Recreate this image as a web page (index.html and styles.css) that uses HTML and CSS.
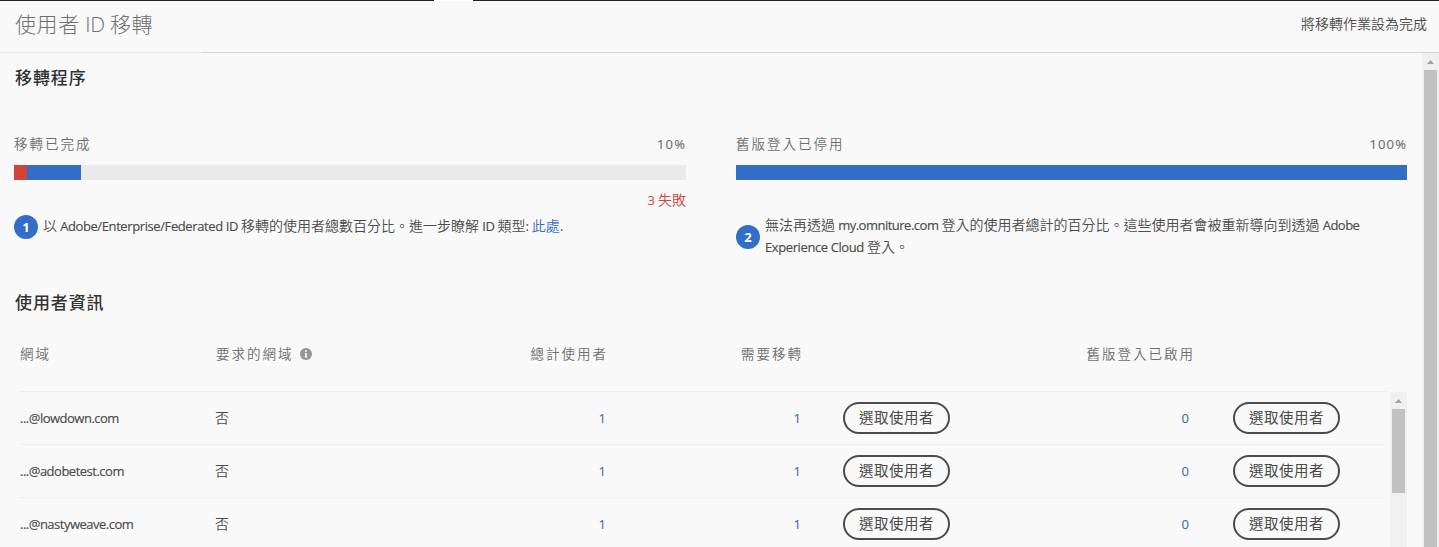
FILE: index.html
```html
<!DOCTYPE html>
<html lang="zh-Hant">
<head>
<meta charset="utf-8">
<title>使用者 ID 移轉</title>
<link rel="stylesheet" href="styles.css">
</head>
<body>
<div class="app">
  <div class="topline"><span class="topline-tab"></span></div>
  <header class="header">
    <h1 class="title">使用者 <span class="title-latin">ID</span> 移轉</h1>
    <a class="complete">將移轉作業設為完成</a>
  </header>
  <div class="header-rule"><span class="header-rule-light"></span></div>
  <div class="body">
    <main class="content">
      <h2 class="section-title">移轉程序</h2>
      <div class="progress-row">
        <section class="progress">
          <div class="progress-head"><span class="label">移轉已完成</span><span class="percent">10%</span></div>
          <div class="track"><span class="fill fill-red" style="width:2%"></span><span class="fill fill-blue" style="width:8%"></span></div>
          <div class="failed"><span class="failed-num">3</span>失敗</div>
          <div class="note"><span class="badge">1</span><p class="note-text">以 <span class="latin latin-wide">Adobe/Enterprise/Federated ID</span> 移轉的使用者總數百分比。進一步瞭解 <span class="latin latin-wide">ID</span> 類型<span class="latin latin-wide">:</span> <a class="link">此處</a>.</p></div>
        </section>
        <section class="progress">
          <div class="progress-head"><span class="label">舊版登入已停用</span><span class="percent">100%</span></div>
          <div class="track"><span class="fill fill-blue" style="width:100%"></span></div>
          <div class="failed"></div>
          <div class="note"><span class="badge">2</span><p class="note-text">無法再透過 <span class="latin">my.omniture.com</span> 登入的使用者總計的百分比。這些使用者會被重新導向到透過 <span class="latin">Adobe</span><br><span class="latin latin-wide">Experience Cloud</span> 登入。</p></div>
        </section>
      </div>
      <h2 class="section-title section-users">使用者資訊</h2>
      <div class="grid table-head">
        <span class="label">網域</span>
        <span class="label with-icon">要求的網域
          <svg class="info" viewBox="0 0 12 12"><circle cx="6" cy="6" r="6"/><circle class="info-mark" cx="6" cy="3" r="1"/><path class="info-mark" d="M4.8 4.9h2v3.7h.7v.8h-3v-.8h.7V5.7h-.4z"/></svg>
        </span>
        <span class="label right">總計使用者</span>
        <span class="label right">需要移轉</span>
        <span></span>
        <span class="label right legacy">舊版登入已啟用</span>
      </div>
      <div class="table">
        <div class="rows">
          <div class="grid row"><span class="domain">...@lowdown.com</span><span class="no">否</span><a class="num">1</a><a class="num">1</a><button class="button">選取使用者</button><a class="num num-legacy">0</a><button class="button">選取使用者</button></div>
          <div class="grid row"><span class="domain">...@adobetest.com</span><span class="no">否</span><a class="num">1</a><a class="num">1</a><button class="button">選取使用者</button><a class="num num-legacy">0</a><button class="button">選取使用者</button></div>
          <div class="grid row"><span class="domain">...@nastyweave.com</span><span class="no">否</span><a class="num">1</a><a class="num">1</a><button class="button">選取使用者</button><a class="num num-legacy">0</a><button class="button">選取使用者</button></div>
        </div>
        <div class="scrollbar table-scrollbar"><svg class="arrow" viewBox="0 0 17 17"><path d="M5 11h7L8.5 7z"/></svg><span class="thumb thumb-short"></span></div>
      </div>
    </main>
    <div class="scrollbar"><svg class="arrow" viewBox="0 0 17 17"><path d="M5 11h7L8.5 7z"/></svg><span class="thumb thumb-long"></span></div>
  </div>
</div>
</body>
</html>
```
FILE: styles.css
```css
* { box-sizing: border-box; }
body { margin: 0; background: #f9f9f9; color: #4b4b4b; font-family: "Noto Sans CJK TC", sans-serif; font-size: 14px; overflow: hidden; }
h1, h2, p { margin: 0; }
.app { height: 547px; display: flex; flex-direction: column; overflow: hidden; }
.topline { height: 1px; flex: none; background: #222; display: flex; padding-left: 434px; }
.topline-tab { width: 39px; background: #fff; }
.header { height: 51px; flex: none; display: flex; justify-content: space-between; padding: 0 12px 0 15px; }
.title { font-size: 21px; font-weight: 300; line-height: 45px; letter-spacing: .6px; color: #707070; white-space: nowrap; word-spacing: .3px; }
.title-latin { font-family: "Open Sans", sans-serif; font-size: 21px; font-weight: 300; letter-spacing: -.5px; }
.complete { font-weight: 350; line-height: 45px; }
.header-rule { height: 1px; flex: none; background: #d3d3d3; display: flex; }
.header-rule-light { width: 201px; background: #eaeaea; }
.body { flex: 1; display: flex; min-height: 0; }
.content { flex: 1; padding-left: 14px; }
.section-title { height: 48px; padding-left: 1px; font-size: 17px; font-weight: 500; line-height: 47px; letter-spacing: .9px; color: #323232; }
.progress-row { display: grid; grid-template-columns: 672px 671px; column-gap: 50px; margin-top: 32px; }
.progress-head { display: flex; justify-content: space-between; height: 32px; line-height: 21px; }
.label { color: #6e6e6e; font-size: 13.5px; font-weight: 350; letter-spacing: 2px; white-space: nowrap; }
.percent { font-family: "Open Sans", sans-serif; font-size: 13px; letter-spacing: 1.1px; color: #6e6e6e; -webkit-text-stroke: .15px; line-height: 23px; }
.track { height: 15px; background: #eaeaea; display: flex; }
.fill-red { background: #d14438; }
.fill-blue { background: #326dc8; }
.failed { height: 34px; padding-top: 9px; line-height: 20px; text-align: right; color: #d14438; font-weight: 350; }
.failed-num { font-family: "Open Sans", sans-serif; font-size: 13px; margin-right: 3px; font-weight: 500; }
.note { display: flex; align-items: center; }
.note-text { padding-left: 5px; font-weight: 350; line-height: 21px; white-space: nowrap; }
.badge { position: relative; top: 1px; flex: none; width: 24px; height: 24px; border-radius: 50%; background: #326dc8; color: #fff; font: 700 13px/24px "Open Sans", sans-serif; text-align: center; }
.latin, .domain { font-family: "Open Sans", sans-serif; font-size: 13px; font-weight: 500; letter-spacing: -.5px; -webkit-text-stroke: .15px; }
.latin-wide { letter-spacing: -.4px; }
.link, .num { color: #326dc8; }
.section-users { margin-top: 20px; }
.grid { display: grid; grid-template-columns: 196px 194px 196px 195px 149px 240px 150px; padding-left: 6px; align-items: center; }
.table-head { height: 65px; padding-top: 16px; align-items: start; line-height: 22px; }
.with-icon { display: flex; align-items: center; gap: 6px; }
.info { width: 12px; height: 12px; fill: #959595; position: relative; top: 1px; }
.info .info-mark { fill: #f9f9f9; }
.right { text-align: right; margin-right: -2px; }
.legacy { margin-right: -5px; }
.table { display: flex; width: 1393px; height: 400px; }
.rows { flex: 1; }
.row { height: 53px; border-top: 1px solid #eee; margin-left: 6px; padding-left: 0; width: 1364px; }
.row:first-child { width: 1370px; }
.domain { white-space: nowrap; }
.no { font-weight: 350; margin-left: -1px; line-height: 20px; padding-bottom: 2px; }
.num { font-family: "Open Sans", sans-serif; font-size: 13px; -webkit-text-stroke: .1px; text-align: right; }
.num-legacy { padding-right: 1px; }
.button { justify-self: end; width: 107px; height: 32px; padding: 0 0 2px; border: 2px solid #4b4b4b; border-radius: 16px; background: transparent; color: #4b4b4b; font: 400 14.5px/26px "Noto Sans CJK TC", sans-serif; letter-spacing: .5px; text-align: center; }
.scrollbar { width: 17px; flex: none; background: #f0f0f0; display: flex; flex-direction: column; align-items: center; }
.table-scrollbar { margin-top: 1px; }
.arrow { width: 17px; height: 17px; fill: #a3a3a3; flex: none; }
.thumb { width: 13px; background: #c1c1c1; }
.thumb-short { height: 84px; }
.thumb-long { flex: 1; }
```
